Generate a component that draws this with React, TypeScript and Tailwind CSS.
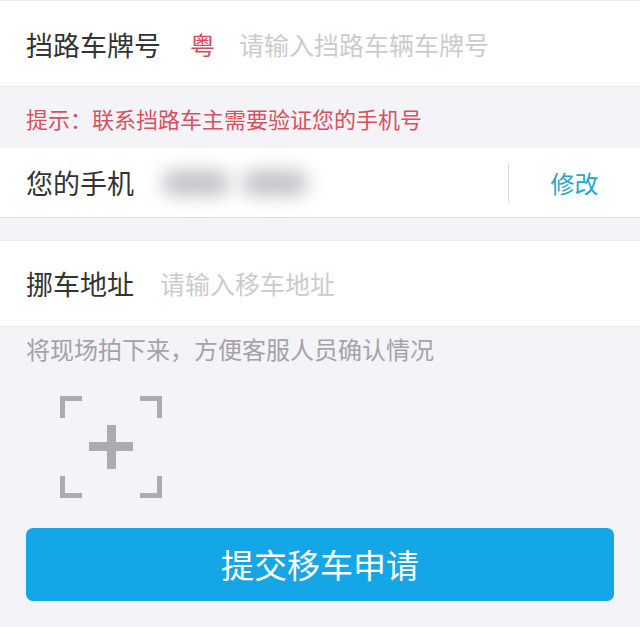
import React from "react";

const font = { fontFamily: '"Noto Sans CJK SC", "Noto Sans", sans-serif' };

function Corner({ pos }: { pos: string }) {
  return <div className={`absolute w-[22px] h-[22px] border-[#ababb0] ${pos}`} />;
}

export default function App() {
  return (
    <div className="w-[640px] h-[627px] bg-[#f4f3f7] overflow-hidden" style={font}>
      {/* 车牌 */}
      <div className="h-[86px] bg-white border-t border-[#ececee] flex items-center px-[26px] pt-[2px]">
        <span className="text-[27px] text-[#333] leading-none">挡路车牌号</span>
        <span className="ml-[29px] text-[25px] text-[#d64a5a] leading-none">粤</span>
        <span className="ml-[24px] text-[25px] text-[#cbcbcf] leading-none">请输入挡路车辆车牌号</span>
      </div>

      {/* 提示 */}
      <div className="h-[62px] flex items-center px-[26px] border-t border-[#e8e7ec]">
        <span className="text-[22px] text-[#d9505f] leading-none">提示：联系挡路车主需要验证您的手机号</span>
      </div>

      {/* 手机 */}
      <div className="h-[70px] bg-white border-b border-[#e3e3e6] flex items-center pl-[26px]">
        <span className="text-[27px] text-[#333] leading-none">您的手机</span>
        <div className="relative ml-[24px] w-[160px] h-[50px]">
          <div className="absolute left-[4px] top-[12px] w-[68px] h-[26px] rounded-full bg-[#c4c3c9] blur-[9px]" />
          <div className="absolute left-[84px] top-[12px] w-[66px] h-[26px] rounded-full bg-[#c4c3c9] blur-[9px]" />
        </div>
        <div className="ml-auto w-px h-[40px] bg-[#dcdcdf]" />
        <span className="w-[131px] text-center text-[24px] text-[#2aa5c8] leading-none">修改</span>
      </div>

      <div className="h-[22px]" />

      {/* 挪车地址 */}
      <div className="h-[87px] bg-white border-t border-[#ececee] border-b border-[#e3e3e6] flex items-center px-[26px]">
        <span className="text-[27px] text-[#333] leading-none">挪车地址</span>
        <span className="ml-[26px] text-[25px] text-[#cbcbcf] leading-none">请输入移车地址</span>
      </div>

      {/* 拍照 */}
      <div className="px-[26px] pt-[7px]">
        <p className="text-[24px] leading-[30px] text-[#a3a3a8]">将现场拍下来，方便客服人员确认情况</p>
        <div className="relative ml-[34px] mt-[32px] w-[102px] h-[102px]">
          <Corner pos="left-0 top-0 border-l-[5px] border-t-[5px]" />
          <Corner pos="right-0 top-0 border-r-[5px] border-t-[5px]" />
          <Corner pos="left-0 bottom-0 border-l-[5px] border-b-[5px]" />
          <Corner pos="right-0 bottom-0 border-r-[5px] border-b-[5px]" />
          <div className="absolute left-[29px] top-[46px] w-[44px] h-[9px] bg-[#ababb0]" />
          <div className="absolute left-[47px] top-[29px] w-[9px] h-[44px] bg-[#ababb0]" />
        </div>
        <button className="mt-[30px] w-full h-[73px] rounded-[7px] bg-[#14a6e6] text-white text-[33px] leading-none">
          提交移车申请
        </button>
      </div>
    </div>
  );
}
